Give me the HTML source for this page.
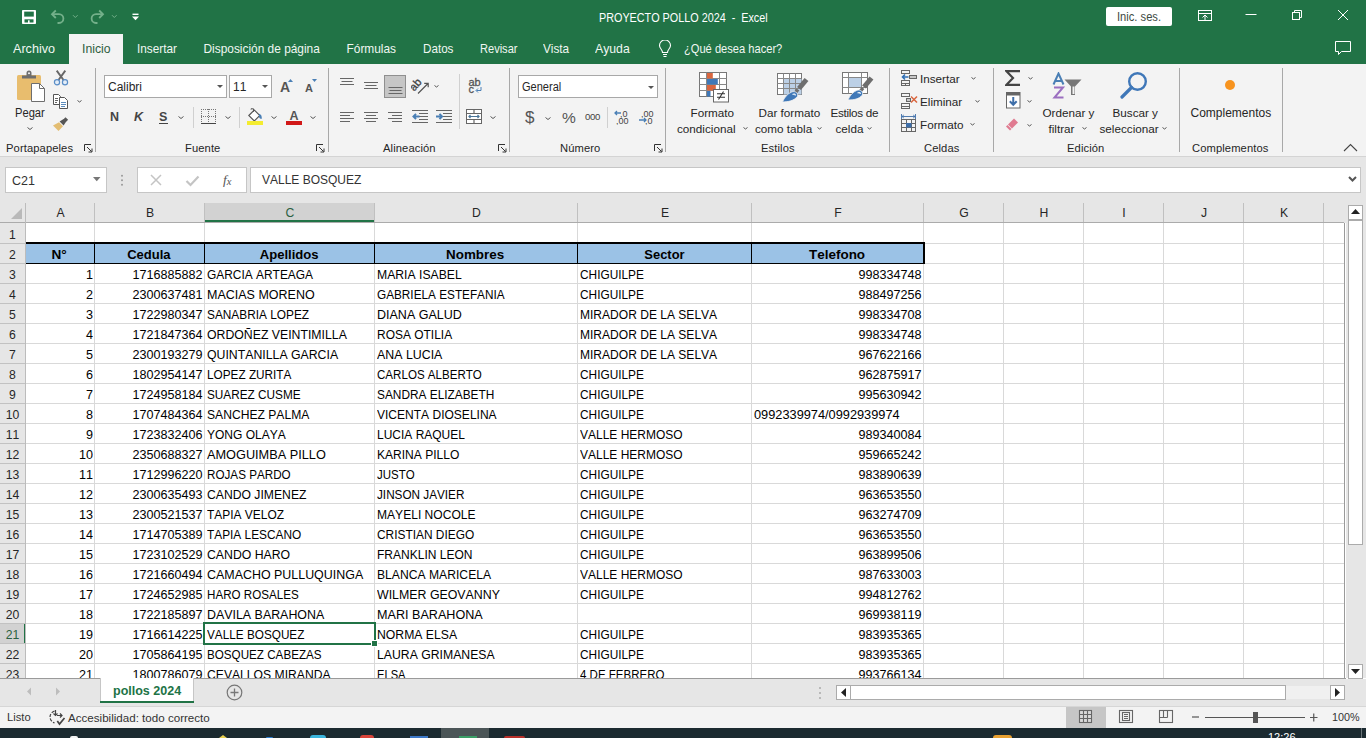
<!DOCTYPE html><html><head><meta charset="utf-8"><style>
*{margin:0;padding:0;box-sizing:border-box}
html,body{width:1366px;height:738px;overflow:hidden;background:#fff;font-family:"Liberation Sans",sans-serif;font-kerning:none}
.a{position:absolute}
.t{position:absolute;white-space:pre;line-height:1}
#title{left:0;top:0;width:1366px;height:64px;background:#217346}
#ribbon{left:0;top:64px;width:1366px;height:93px;background:#f3f3f3;border-bottom:1px solid #d4d4d4}
#fbar{left:0;top:157px;width:1366px;height:46px;background:#e6e6e6}
.box{position:absolute;background:#fff;border:1px solid #c6c6c6}
.tab{color:#f0f7f2;font-size:11.9px}
.rl{font-size:12px;color:#262626}
.gl{font-size:12px;color:#262626}
.sep{position:absolute;width:1px;background:#c8c8c8}
.cell{font-size:12.5px;color:#000;position:absolute;white-space:pre;line-height:1}
.hdr{font-size:12.2px;color:#262626;position:absolute;white-space:pre;line-height:1}
</style></head><body>
<div id="title" class="a"></div>
<svg class="a" style="left:22px;top:10px" width="14" height="14" viewBox="0 0 14 14"><rect x="0" y="0" width="14" height="14" rx="0.8" fill="#fff"/><rect x="2.2" y="1.6" width="9.6" height="5" fill="#217346"/><rect x="2.5" y="9.3" width="9" height="3.2" fill="#217346"/><rect x="6" y="10.3" width="1.6" height="3" fill="#fff"/></svg>
<svg class="a" style="left:48px;top:9px" width="80" height="16" viewBox="0 0 80 16"><g fill="none" stroke="#74b08a" stroke-width="1.8"><path d="M4 5.2h7a4.4 4.4 0 0 1 0 8.8H9.5"/><path d="M7.8 1.5L4 5.2 7.8 9"/><path d="M25 6.2l2.3 2.3L29.6 6.2" stroke-width="1"/><path d="M55 5.2h-7a4.4 4.4 0 0 0 0 8.8h1.5"/><path d="M51.2 1.5L55 5.2 51.2 9"/><path d="M64 6.2l2.3 2.3L68.6 6.2" stroke-width="1"/></g></svg>
<svg class="a" style="left:132px;top:13px" width="7" height="8" viewBox="0 0 7 8"><rect x="0.5" y="0.6" width="6" height="1.4" fill="#fff"/><path d="M0 3.4h7L3.5 7.2z" fill="#fff"/></svg>
<div class="t" style="left:599px;top:12px;font-size:12px;color:#fff;transform:scaleX(0.9);transform-origin:0 0">PROYECTO POLLO 2024  -  Excel</div>
<div class="a" style="left:1106px;top:7px;width:66px;height:19px;background:#fff;border-radius:2px"></div>
<div class="t" style="left:1117px;top:11px;font-size:12px;color:#3d4a42;transform:scaleX(0.93);transform-origin:0 0">Inic. ses.</div>
<svg class="a" style="left:1195px;top:8px" width="170" height="50" viewBox="0 0 170 50"><g fill="none" stroke="#fff" stroke-width="1"><rect x="3.5" y="2.5" width="13" height="10"/><path d="M3.5 5.5h13M10 12V7M7.5 9.5L10 7l2.5 2.5"/><path d="M50.5 6.5h11"/><rect x="97.5" y="4.5" width="7" height="7"/><path d="M99.5 4.5v-2h7v7h-2"/><path d="M143 2l10 10M153 2l-10 10"/><path d="M140.5 33.5h15v10h-9l-3 3v-3h-3z"/></g></svg>
<div class="a" style="left:69px;top:34px;width:54px;height:30px;background:#f3f3f3"></div>
<div class="t tab" style="left:13px;top:44px;color:#f0f7f2;transform:scaleX(1.06);transform-origin:0 0">Archivo</div>
<div class="t tab" style="left:81.5px;top:44px;color:#2f5e41;transform:scaleX(1.03);transform-origin:0 0">Inicio</div>
<div class="t tab" style="left:137px;top:44px;color:#f0f7f2;transform:scaleX(0.99);transform-origin:0 0">Insertar</div>
<div class="t tab" style="left:203.5px;top:44px;color:#f0f7f2;transform:scaleX(1.0);transform-origin:0 0">Disposición de página</div>
<div class="t tab" style="left:346.5px;top:44px;color:#f0f7f2;transform:scaleX(1.0);transform-origin:0 0">Fórmulas</div>
<div class="t tab" style="left:422.5px;top:44px;color:#f0f7f2;transform:scaleX(0.98);transform-origin:0 0">Datos</div>
<div class="t tab" style="left:479.5px;top:44px;color:#f0f7f2;transform:scaleX(0.93);transform-origin:0 0">Revisar</div>
<div class="t tab" style="left:543px;top:44px;color:#f0f7f2;transform:scaleX(0.99);transform-origin:0 0">Vista</div>
<div class="t tab" style="left:595px;top:44px;color:#f0f7f2;transform:scaleX(1.03);transform-origin:0 0">Ayuda</div>
<svg class="a" style="left:658px;top:40px" width="14" height="18" viewBox="0 0 14 18"><g fill="none" stroke="#fff" stroke-width="1.1"><path d="M4.5 12.5c0-3-3-4-3-7a5.5 5.5 0 0 1 11 0c0 3-3 4-3 7z"/><path d="M5 14.5h4M5.5 16.5h3"/></g></svg>
<div class="t tab" style="left:684px;top:44px;transform:scaleX(0.935);transform-origin:0 0">¿Qué desea hacer?</div>
<div id="ribbon" class="a"></div>
<div class="a" style="left:95px;top:68px;width:1px;height:84px;background:#a8a8a8"></div>
<div class="a" style="left:328px;top:68px;width:1px;height:84px;background:#a8a8a8"></div>
<div class="a" style="left:509px;top:68px;width:1px;height:84px;background:#a8a8a8"></div>
<div class="a" style="left:665px;top:68px;width:1px;height:84px;background:#a8a8a8"></div>
<div class="a" style="left:889px;top:68px;width:1px;height:84px;background:#a8a8a8"></div>
<div class="a" style="left:993px;top:68px;width:1px;height:84px;background:#a8a8a8"></div>
<div class="a" style="left:1179px;top:68px;width:1px;height:84px;background:#a8a8a8"></div>
<div class="a" style="left:1282px;top:68px;width:1px;height:84px;background:#a8a8a8"></div>
<div class="t" style="left:6px;top:142.52px;font-size:11.2px;color:#262626;letter-spacing:0.1px">Portapapeles</div>
<div class="t" style="left:185px;top:142.52px;font-size:11.2px;color:#262626;letter-spacing:0.1px">Fuente</div>
<div class="t" style="left:383px;top:142.52px;font-size:11.2px;color:#262626;letter-spacing:0.1px">Alineación</div>
<div class="t" style="left:560px;top:142.52px;font-size:11.2px;color:#262626;letter-spacing:0.1px">Número</div>
<div class="t" style="left:761px;top:142.52px;font-size:11.2px;color:#262626;letter-spacing:0.1px">Estilos</div>
<div class="t" style="left:924px;top:142.52px;font-size:11.2px;color:#262626;letter-spacing:0.1px">Celdas</div>
<div class="t" style="left:1067px;top:142.52px;font-size:11.2px;color:#262626;letter-spacing:0.1px">Edición</div>
<div class="t" style="left:1192px;top:142.52px;font-size:11.2px;color:#262626;letter-spacing:0.1px">Complementos</div>
<svg class="a" style="left:84px;top:144px" width="9" height="9" viewBox="0 0 9 9"><g fill="none" stroke="#333" stroke-width="1"><path d="M0.5 7V0.5H7"/><path d="M3 3l4.5 4.5M8 4.5V8H4.5"/></g></svg>
<svg class="a" style="left:316px;top:144px" width="9" height="9" viewBox="0 0 9 9"><g fill="none" stroke="#333" stroke-width="1"><path d="M0.5 7V0.5H7"/><path d="M3 3l4.5 4.5M8 4.5V8H4.5"/></g></svg>
<svg class="a" style="left:498px;top:144px" width="9" height="9" viewBox="0 0 9 9"><g fill="none" stroke="#333" stroke-width="1"><path d="M0.5 7V0.5H7"/><path d="M3 3l4.5 4.5M8 4.5V8H4.5"/></g></svg>
<svg class="a" style="left:654px;top:144px" width="9" height="9" viewBox="0 0 9 9"><g fill="none" stroke="#333" stroke-width="1"><path d="M0.5 7V0.5H7"/><path d="M3 3l4.5 4.5M8 4.5V8H4.5"/></g></svg>
<svg class="a" style="left:15px;top:70px" width="32" height="34" viewBox="0 0 32 34">
<rect x="2" y="5" width="24" height="25" rx="1.5" fill="#e8bd6e"/>
<path d="M7 8.5V5.5h4.5V3a2.5 2.5 0 0 1 5 0v2.5H21v3z" fill="#6e6e6e"/><circle cx="14" cy="3.3" r="1" fill="#f3f3f3"/>
<path d="M16.5 13.5h8l5 5v13h-13z" fill="#fff" stroke="#6e6e6e" stroke-width="1"/>
<path d="M24.5 13.5v5h5" fill="none" stroke="#6e6e6e" stroke-width="1"/>
</svg>
<div class="t" style="left:14.5px;top:106.85px;font-size:12px;color:#262626;transform:scaleX(0.93);transform-origin:0 0">Pegar</div>
<svg class="a" style="left:27px;top:127px" width="6" height="4" viewBox="0 0 6 4"><path d="M0.5 0.5l2.5 2.0l2.5 -2.0" fill="none" stroke="#555" stroke-width="1"/></svg>
<svg class="a" style="left:53px;top:70px" width="16" height="16" viewBox="0 0 16 16">
<path d="M5.3 10.2L12.3 0.6M10.7 10.2L3.7 0.6" fill="none" stroke="#666" stroke-width="1.9"/>
<g fill="#e4edf7" stroke="#5b8ec7" stroke-width="1.2"><circle cx="4" cy="12.3" r="2.6"/><circle cx="12" cy="12.3" r="2.6"/></g>
</svg>
<svg class="a" style="left:52px;top:93px" width="17" height="16" viewBox="0 0 17 16">
<path d="M1.5 1.5h5l2 2v8h-7z" fill="#fff" stroke="#555" stroke-width="1"/>
<path d="M3 5.5h3M3 7.5h3M3 9.5h2" stroke="#555" stroke-width="0.9"/>
<path d="M7.5 4.5h5l3 3v8h-8z" fill="#fff" stroke="#555" stroke-width="1"/>
<path d="M9 9.5h5M9 11.5h5M9 13.5h4" stroke="#4a7fb5" stroke-width="0.9"/>
</svg>
<svg class="a" style="left:77px;top:100px" width="5" height="4" viewBox="0 0 5 4"><path d="M0.5 0.5l2.0 1.5l2.0 -1.5" fill="none" stroke="#555" stroke-width="1"/></svg>
<svg class="a" style="left:52px;top:116px" width="18" height="16" viewBox="0 0 18 16">
<path d="M13.5 1.2l2.6 2.6-2.2 2.2-2.6-2.6z" fill="#555"/>
<path d="M7.6 5.6l4-2.6 2.6 2.6-2.6 4z" fill="#555"/>
<path d="M7 6.2l4 4-4.5 4.8L1 9.6z" fill="#e3bd72"/>
</svg>
<div class="box" style="left:104px;top:75px;width:123px;height:23px;border-color:#a8a8a8"></div>
<div class="t" style="left:108px;top:80.85px;font-size:12px;color:#262626;">Calibri</div>
<svg class="a" style="left:217px;top:85px" width="6" height="3"><path d="M0 0h6L3 3z" fill="#555"/></svg>
<div class="box" style="left:229px;top:75px;width:43px;height:23px;border-color:#a8a8a8"></div>
<div class="t" style="left:233px;top:80.85px;font-size:12px;color:#262626;">11</div>
<svg class="a" style="left:262px;top:85px" width="6" height="3"><path d="M0 0h6L3 3z" fill="#555"/></svg>
<div class="t" style="left:280px;top:80.46px;font-size:14px;color:#555;font-weight:bold">A</div>
<svg class="a" style="left:288px;top:79px" width="5" height="3"><path d="M0 3h5L2.5 0z" fill="#4a7fb5"/></svg>
<div class="t" style="left:305px;top:82.99px;font-size:11px;color:#555;font-weight:bold">A</div>
<svg class="a" style="left:312px;top:79px" width="5" height="3"><path d="M0 0h5L2.5 3z" fill="#4a7fb5"/></svg>
<div class="t" style="left:110px;top:110.92px;font-size:12.5px;color:#444;font-weight:bold">N</div>
<div class="t" style="left:134px;top:110.92px;font-size:12.5px;color:#444;font-weight:bold;font-style:italic">K</div>
<div class="t" style="left:159px;top:110.92px;font-size:12.5px;color:#444;font-weight:bold">S</div>
<div class="a" style="left:159px;top:123px;width:9px;height:1px;background:#444"></div>
<svg class="a" style="left:178px;top:116px" width="6" height="4" viewBox="0 0 6 4"><path d="M0.5 0.5l2.5 2.0l2.5 -2.0" fill="none" stroke="#555" stroke-width="1"/></svg>
<div class="a" style="left:193px;top:107px;width:1px;height:21px;background:#d0d0d0"></div>
<svg class="a" style="left:201px;top:109px" width="15" height="15" viewBox="0 0 15 15">
<g fill="none" stroke="#777" stroke-width="1" stroke-dasharray="1 1"><path d="M0 0.5h15M14.5 0v14M0.5 0v14M7.5 0v14M0 7.5h15"/></g>
<path d="M0 14.5h15" stroke="#444" stroke-width="1"/>
</svg>
<svg class="a" style="left:225px;top:116px" width="6" height="4" viewBox="0 0 6 4"><path d="M0.5 0.5l2.5 2.0l2.5 -2.0" fill="none" stroke="#555" stroke-width="1"/></svg>
<div class="a" style="left:239px;top:107px;width:1px;height:21px;background:#d0d0d0"></div>
<svg class="a" style="left:246px;top:108px" width="18" height="18" viewBox="0 0 18 18">
<path d="M2.8 7.5l5.5-5.5 5.5 5.5-5.5 5.5z" fill="#fff" stroke="#555" stroke-width="1.1"/>
<path d="M5 1.5V0.8h2.5v3" fill="none" stroke="#555" stroke-width="1"/>
<path d="M13 5.8c2.2 0.6 3.2 2.6 2.6 5.2-1.4-0.2-2.6-1.4-2.6-2.6z" fill="#4a7fb5"/>
<rect x="1" y="13" width="16" height="4" fill="#f4ec30"/>
</svg>
<svg class="a" style="left:271px;top:116px" width="6" height="4" viewBox="0 0 6 4"><path d="M0.5 0.5l2.5 2.0l2.5 -2.0" fill="none" stroke="#555" stroke-width="1"/></svg>
<div class="t" style="left:289.5px;top:110.42px;font-size:12.5px;color:#555;font-weight:bold">A</div>
<div class="a" style="left:286px;top:121px;width:16px;height:4px;background:#d11818"></div>
<svg class="a" style="left:310px;top:116px" width="6" height="4" viewBox="0 0 6 4"><path d="M0.5 0.5l2.5 2.0l2.5 -2.0" fill="none" stroke="#555" stroke-width="1"/></svg>
<div class="a" style="left:384px;top:75px;width:22px;height:23px;background:#c6c6c6;border:1px solid #8f8f8f"></div>
<svg class="a" style="left:339px;top:76px" width="120" height="50" viewBox="0 0 120 50">
<g stroke="#666" stroke-width="1">
<path d="M1 2.5h14M2.5 5.5h11M1 8.5h14"/>
<path d="M25 6.5h14M26.5 9.5h11M25 12.5h14"/>
<path d="M49.5 11.5h14M50.5 14.5h12M49.5 17.5h14"/>
<path d="M1 36.5h14M1 39.5h10M1 42.5h14M1 45.5h10"/>
<path d="M25 36.5h14M27 39.5h10M25 42.5h14M27 45.5h10"/>
<path d="M49 36.5h14M53 39.5h10M49 42.5h14M53 45.5h10"/>
<path d="M73 34.5h16M80 37.5h9M80 40.5h9M80 43.5h9M73 46.5h16"/>
<path d="M97 34.5h16M104 37.5h9M104 40.5h9M104 43.5h9M97 46.5h16"/>
</g>
<g fill="none" stroke="#4a7fb5" stroke-width="1.9"><path d="M74.5 40.5h6M77 37.8l-2.6 2.7 2.6 2.7"/><path d="M97 40.5h6M100.5 37.8l2.6 2.7-2.6 2.7"/></g>
</svg>
<svg class="a" style="left:411px;top:77px" width="19" height="17" viewBox="0 0 19 17">
<text x="0" y="0" transform="translate(3.2 14.8) rotate(-50)" font-family="Liberation Sans" font-size="11" fill="#444" stroke="#444" stroke-width="0.35">ab</text>
<path d="M7 16.5L17 6.5M13.2 6.3h4v4" fill="none" stroke="#555" stroke-width="1.2"/>
</svg>
<svg class="a" style="left:434px;top:85px" width="5" height="4" viewBox="0 0 5 4"><path d="M0.5 0.5l2.0 1.5l2.0 -1.5" fill="none" stroke="#555" stroke-width="1"/></svg>
<div class="a" style="left:459px;top:74px;width:1px;height:55px;background:#d0d0d0"></div>
<div class="t" style="left:468.5px;top:76.69px;font-size:11px;color:#555;-webkit-text-stroke:0.3px #555">ab</div>
<div class="t" style="left:468.5px;top:83.69px;font-size:11px;color:#555;-webkit-text-stroke:0.3px #555">c</div>
<svg class="a" style="left:475px;top:87px" width="7" height="6"><path d="M6 0v3.5H1.5M3 1.5L1 3.5 3 5.5" fill="none" stroke="#4a7fb5" stroke-width="1"/></svg>
<svg class="a" style="left:466px;top:109px" width="17" height="16" viewBox="0 0 17 16">
<rect x="0.5" y="0.5" width="15" height="14" fill="#fff" stroke="#666" stroke-width="1"/>
<path d="M0.5 4.5h15M0.5 10.5h15M8 0.5v4M8 10.5v4" stroke="#666" stroke-width="1.2"/>
<path d="M3 7.5h10M4.5 6l-1.5 1.5 1.5 1.5M11.5 6l1.5 1.5-1.5 1.5" fill="none" stroke="#4a7598" stroke-width="1.2"/>
</svg>
<svg class="a" style="left:490px;top:116px" width="6" height="4" viewBox="0 0 6 4"><path d="M0.5 0.5l2.5 2.0l2.5 -2.0" fill="none" stroke="#555" stroke-width="1"/></svg>
<div class="box" style="left:518px;top:75px;width:140px;height:23px;border-color:#a8a8a8"></div>
<div class="t" style="left:522px;top:80.85px;font-size:12px;color:#262626;transform:scaleX(0.92);transform-origin:0 0">General</div>
<svg class="a" style="left:648px;top:86px" width="6" height="3"><path d="M0 0h6L3 3z" fill="#555"/></svg>
<div class="t" style="left:525px;top:109.12px;font-size:17px;color:#555;">$</div>
<svg class="a" style="left:545px;top:117px" width="6" height="4" viewBox="0 0 6 4"><path d="M0.5 0.5l2.5 2.0l2.5 -2.0" fill="none" stroke="#555" stroke-width="1"/></svg>
<div class="t" style="left:562px;top:109.89px;font-size:15.5px;color:#555;">%</div>
<div class="t" style="left:585px;top:112.18px;font-size:9.6px;color:#444;letter-spacing:-0.3px">000</div>
<div class="a" style="left:607px;top:107px;width:1px;height:21px;background:#d0d0d0"></div>
<svg class="a" style="left:614px;top:109px" width="42" height="16" viewBox="0 0 42 16">
<text x="6" y="7.5" font-family="Liberation Sans" font-size="9" fill="#444">,0</text>
<text x="2" y="15" font-family="Liberation Sans" font-size="9" fill="#444">,00</text>
<path d="M1 4h6M3 2L1 4 3 6" fill="none" stroke="#4a7fb5" stroke-width="1.3"/>
<text x="27" y="7.5" font-family="Liberation Sans" font-size="9" fill="#444">,00</text>
<text x="31" y="15" font-family="Liberation Sans" font-size="9" fill="#444">,0</text>
<path d="M25 11h7M30 9l2 2-2 2" fill="none" stroke="#4a7fb5" stroke-width="1.3"/>
</svg>
<svg class="a" style="left:699px;top:72px" width="31" height="32" viewBox="0 0 31 32">
<rect x="0.5" y="0.5" width="27" height="24" fill="#fff" stroke="#777" stroke-width="1"/>
<path d="M0.5 6.5h27M0.5 12.5h27M0.5 18.5h27M7.5 0.5v24M20.5 0.5v24" stroke="#888" stroke-width="1"/>
<rect x="8" y="1" width="5.8" height="5.5" fill="#d9663f"/>
<rect x="8" y="7" width="10.8" height="5.5" fill="#3f78b8"/>
<rect x="8" y="13" width="8.8" height="5.5" fill="#d9663f"/>
<rect x="8" y="19" width="3.5" height="5.5" fill="#3f78b8"/>
<rect x="14.5" y="17.5" width="15" height="12.5" fill="#fff" stroke="#666" stroke-width="1"/>
<path d="M18 21.8h8M18 25.2h8M24.5 19.5l-5 8" stroke="#333" stroke-width="1.1"/>
</svg>
<div class="t" style="left:690.5px;top:107.10px;font-size:11.7px;color:#262626;">Formato</div>
<div class="t" style="left:677px;top:123.10px;font-size:11.7px;color:#262626;">condicional</div>
<svg class="a" style="left:743px;top:127px" width="5" height="4" viewBox="0 0 5 4"><path d="M0.5 0.5l2.0 1.5l2.0 -1.5" fill="none" stroke="#555" stroke-width="1"/></svg>
<svg class="a" style="left:777px;top:73px" width="33" height="31" viewBox="0 0 33 31">
<rect x="0.5" y="0.5" width="24" height="21" fill="#fff" stroke="#777"/>
<rect x="7" y="6" width="17.5" height="15.5" fill="#bcd0e6"/>
<path d="M0.5 5.5h24M0.5 10.5h24M0.5 15.5h24M6.5 0.5v21M12.5 0.5v21M18.5 0.5v21" stroke="#888" stroke-width="1"/>
<path d="M29.5 6.5L22 15.5" stroke="#6e6e6e" stroke-width="5"/>
<path d="M21 16.5L18.5 19.5" stroke="#6e6e6e" stroke-width="3.5"/>
<path d="M5.5 29C7 25 10.5 20.5 15 18.8 18.8 17.8 21.6 20.3 20.3 23.6 17.3 27.6 11 29 5.5 29z" fill="#3f78b8" stroke="#f3f3f3" stroke-width="0.8"/>
<path d="M15.5 21.5c1.5-0.8 3-0.3 2.8 1" fill="none" stroke="#e8f2fb" stroke-width="1.3"/>
</svg>
<div class="t" style="left:758.5px;top:107.10px;font-size:11.7px;color:#262626;">Dar formato</div>
<div class="t" style="left:755px;top:123.10px;font-size:11.7px;color:#262626;">como tabla</div>
<svg class="a" style="left:817px;top:127px" width="5" height="4" viewBox="0 0 5 4"><path d="M0.5 0.5l2.0 1.5l2.0 -1.5" fill="none" stroke="#555" stroke-width="1"/></svg>
<svg class="a" style="left:842px;top:72px" width="33" height="31" viewBox="0 0 33 31">
<rect x="0.5" y="0.5" width="25" height="21" fill="#fff" stroke="#777"/>
<rect x="7" y="6" width="12" height="9.5" fill="#bcd0e6"/>
<path d="M0.5 5.5h25M0.5 15.5h25M6.5 0.5v21M19.5 0.5v21" stroke="#888" stroke-width="1"/>
<path d="M29.5 6L22 15" stroke="#6e6e6e" stroke-width="5"/>
<path d="M21 16L18.5 19" stroke="#6e6e6e" stroke-width="3.5"/>
<path d="M6 28C7.5 24 11 19.8 15 18.3 18.8 17.3 21.6 19.8 20.3 23.1 17.3 27.1 11.5 28 6 28z" fill="#3f78b8" stroke="#f3f3f3" stroke-width="0.8"/>
<path d="M15.5 21c1.5-0.8 3-0.3 2.8 1" fill="none" stroke="#e8f2fb" stroke-width="1.3"/>
</svg>
<div class="t" style="left:830.5px;top:107.10px;font-size:11.7px;color:#262626;letter-spacing:-0.3px">Estilos de</div>
<div class="t" style="left:835.5px;top:123.10px;font-size:11.7px;color:#262626;">celda</div>
<svg class="a" style="left:867px;top:127px" width="5" height="4" viewBox="0 0 5 4"><path d="M0.5 0.5l2.0 1.5l2.0 -1.5" fill="none" stroke="#555" stroke-width="1"/></svg>
<svg class="a" style="left:901px;top:70px" width="17" height="63" viewBox="0 0 17 63">
<g fill="none" stroke="#666" stroke-width="1">
<rect x="0.5" y="0.5" width="8" height="3"/><rect x="0.5" y="10.5" width="8" height="3"/><rect x="0.5" y="13.5" width="4" height="2"/><rect x="4.5" y="13.5" width="4" height="2"/>
<rect x="8.5" y="5.5" width="7" height="3" fill="#c8c8c8"/>
<rect x="0.5" y="23.5" width="8" height="3"/><rect x="0.5" y="33.5" width="8" height="3"/><rect x="0.5" y="36.5" width="8" height="2"/><rect x="5.5" y="28.5" width="4" height="3" fill="#c8c8c8"/>
<rect x="0.5" y="49.5" width="14" height="12"/><path d="M0.5 53.5h14M0.5 57.5h14M5.5 49.5v12M10.5 49.5v12"/>
</g>
<path d="M1.5 7h6M4 4.5L1.5 7 4 9.5" fill="none" stroke="#2f6fb5" stroke-width="1.6"/>
<path d="M10 26.5l6 6M16 26.5l-6 6" stroke="#d9663f" stroke-width="1.5"/>
<rect x="5" y="53" width="5.5" height="4.5" fill="#3e6ea8"/>
<path d="M1 46.5h13M2.8 45l-1.8 1.5 1.8 1.5M12.2 45l1.8 1.5-1.8 1.5M0.5 44v5M14.5 44v5" fill="none" stroke="#3e6ea8" stroke-width="0.9"/>
</svg>
<div class="t" style="left:920px;top:73.10px;font-size:11.7px;color:#262626;">Insertar</div>
<svg class="a" style="left:971px;top:77px" width="5" height="4" viewBox="0 0 5 4"><path d="M0.5 0.5l2.0 1.5l2.0 -1.5" fill="none" stroke="#555" stroke-width="1"/></svg>
<div class="t" style="left:920px;top:96.10px;font-size:11.7px;color:#262626;">Eliminar</div>
<svg class="a" style="left:975px;top:100px" width="5" height="4" viewBox="0 0 5 4"><path d="M0.5 0.5l2.0 1.5l2.0 -1.5" fill="none" stroke="#555" stroke-width="1"/></svg>
<div class="t" style="left:920px;top:119.10px;font-size:11.7px;color:#262626;">Formato</div>
<svg class="a" style="left:970px;top:123px" width="5" height="4" viewBox="0 0 5 4"><path d="M0.5 0.5l2.0 1.5l2.0 -1.5" fill="none" stroke="#555" stroke-width="1"/></svg>
<svg class="a" style="left:1005px;top:70px" width="16" height="16" viewBox="0 0 16 16"><path d="M15 1.2H1.5L8 8 1.5 14.8H15" fill="none" stroke="#444" stroke-width="2.2" stroke-linejoin="miter"/></svg>
<svg class="a" style="left:1028px;top:77px" width="5" height="4" viewBox="0 0 5 4"><path d="M0.5 0.5l2.0 1.5l2.0 -1.5" fill="none" stroke="#555" stroke-width="1"/></svg>
<svg class="a" style="left:1006px;top:92px" width="15" height="17" viewBox="0 0 15 17">
<rect x="0.5" y="0.5" width="13.5" height="15.5" fill="#fff" stroke="#666"/>
<rect x="0.5" y="0.5" width="13.5" height="3" fill="#666"/>
<path d="M7.25 5v7.5M3.8 9.3l3.45 3.45L10.7 9.3" fill="none" stroke="#3e6ea8" stroke-width="2"/>
</svg>
<svg class="a" style="left:1027px;top:100px" width="5" height="4" viewBox="0 0 5 4"><path d="M0.5 0.5l2.0 1.5l2.0 -1.5" fill="none" stroke="#555" stroke-width="1"/></svg>
<svg class="a" style="left:1005px;top:115px" width="16" height="16" viewBox="0 0 16 16">
<path d="M3 9.5l6-6 4 4-6 6z" fill="#e07a90"/>
<path d="M1 11.5l1.5-1.5 4 4L5 15.5z" fill="#e07a90"/>
</svg>
<svg class="a" style="left:1027px;top:124px" width="5" height="4" viewBox="0 0 5 4"><path d="M0.5 0.5l2.0 1.5l2.0 -1.5" fill="none" stroke="#555" stroke-width="1"/></svg>
<svg class="a" style="left:1052px;top:72px" width="32" height="28" viewBox="0 0 32 28">
<path d="M1.5 12.5L6.5 1.5 11.5 12.5M3.3 9h6.4" fill="none" stroke="#4a7fb5" stroke-width="2"/>
<path d="M2 15.5h9L2.5 25.5h9" fill="none" stroke="#9b6fc0" stroke-width="2"/>
<path d="M12.5 7.5h17l-6.5 7v8.5h-4V14.5z" fill="#777"/>
<path d="M20.5 14.5v7.5h2v-7.5" fill="#f3f3f3"/>
</svg>
<div class="t" style="left:1042.5px;top:106.80px;font-size:11.7px;color:#262626;">Ordenar y</div>
<div class="t" style="left:1048.5px;top:123.10px;font-size:11.7px;color:#262626;">filtrar</div>
<svg class="a" style="left:1082px;top:127px" width="5" height="4" viewBox="0 0 5 4"><path d="M0.5 0.5l2.0 1.5l2.0 -1.5" fill="none" stroke="#555" stroke-width="1"/></svg>
<svg class="a" style="left:1119px;top:71px" width="30" height="28" viewBox="0 0 30 28">
<circle cx="18.5" cy="10.5" r="8.3" fill="none" stroke="#3f77b8" stroke-width="2.4"/>
<path d="M12.5 16.5L3 26" stroke="#3f77b8" stroke-width="3.2" stroke-linecap="round"/>
</svg>
<div class="t" style="left:1112.5px;top:106.80px;font-size:11.7px;color:#262626;">Buscar y</div>
<div class="t" style="left:1099.5px;top:123.10px;font-size:11.7px;color:#262626;">seleccionar</div>
<svg class="a" style="left:1162px;top:127px" width="5" height="4" viewBox="0 0 5 4"><path d="M0.5 0.5l2.0 1.5l2.0 -1.5" fill="none" stroke="#555" stroke-width="1"/></svg>
<div class="a" style="left:1225px;top:80px;width:10px;height:10px;border-radius:5px;background:#f7931e"></div>
<div class="t" style="left:1190.5px;top:106.85px;font-size:12px;color:#262626;">Complementos</div>
<svg class="a" style="left:1343px;top:143px" width="15" height="9" viewBox="0 0 15 9"><path d="M1 8l6.5-6.5L14 8" fill="none" stroke="#444" stroke-width="1.1"/></svg>
<div id="fbar" class="a"></div>
<div class="box" style="left:5px;top:167px;width:102px;height:26px"></div>
<div class="t" style="left:12px;top:175px;font-size:12.5px;color:#333">C21</div>
<svg class="a" style="left:93px;top:177px" width="8" height="5"><path d="M0 0h7.5L3.75 4.2z" fill="#777"/></svg>
<svg class="a" style="left:120px;top:174px" width="4" height="13"><circle cx="2" cy="1.8" r="1" fill="#999"/><circle cx="2" cy="6.3" r="1" fill="#999"/><circle cx="2" cy="10.8" r="1" fill="#999"/></svg>
<div class="box" style="left:137px;top:167px;width:110px;height:26px"></div>
<svg class="a" style="left:149px;top:173px" width="90" height="15" viewBox="0 0 90 15"><g fill="none" stroke="#c4c4c4"><path d="M2 2l10 10M12 2L2 12" stroke-width="1.5"/><path d="M37.5 8l4 4 8-8.5" stroke-width="2.2"/></g></svg>
<div class="t" style="left:223px;top:173px;font-size:13.5px;font-style:italic;font-family:'Liberation Serif',serif;color:#555;font-weight:normal">f<span style="font-size:10.5px;position:relative;top:1px">x</span></div>
<div class="box" style="left:250px;top:167px;width:1111px;height:26px"></div>
<div class="t" style="left:262px;top:174px;font-size:12px;color:#333">VALLE BOSQUEZ</div>
<svg class="a" style="left:1348px;top:176px" width="9" height="6" viewBox="0 0 9 6"><path d="M1 1l3.5 3.5L8 1" fill="none" stroke="#555" stroke-width="2"/></svg>
<div class="a" style="left:0;top:203px;width:1347px;height:20px;background:#e6e6e6"></div>
<div class="a" style="left:204px;top:203px;width:171px;height:19px;background:#d2d2d2"></div>
<div class="a" style="left:204px;top:220px;width:171px;height:2px;background:#217346"></div>
<div class="a" style="left:0;top:222px;width:25px;height:456px;background:#e6e6e6"></div>
<div class="a" style="left:0;top:624px;width:25px;height:19px;background:#d2d2d2"></div>
<div class="a" style="left:24px;top:623px;width:2px;height:21px;background:#217346"></div>
<div class="a" style="left:26px;top:223px;width:1318px;height:455px;background:#fff"></div>
<svg class="a" style="left:10px;top:207px" width="13" height="13"><path d="M12 1v11H1z" fill="#b9b9b9"/></svg>
<div class="hdr" style="left:26px;width:69px;top:207px;text-align:center;color:#262626">A</div>
<div class="hdr" style="left:95px;width:110px;top:207px;text-align:center;color:#262626">B</div>
<div class="hdr" style="left:205px;width:170px;top:207px;text-align:center;color:#2a6041">C</div>
<div class="hdr" style="left:375px;width:203px;top:207px;text-align:center;color:#262626">D</div>
<div class="hdr" style="left:578px;width:174px;top:207px;text-align:center;color:#262626">E</div>
<div class="hdr" style="left:752px;width:172px;top:207px;text-align:center;color:#262626">F</div>
<div class="hdr" style="left:924px;width:80px;top:207px;text-align:center;color:#262626">G</div>
<div class="hdr" style="left:1004px;width:80px;top:207px;text-align:center;color:#262626">H</div>
<div class="hdr" style="left:1084px;width:80px;top:207px;text-align:center;color:#262626">I</div>
<div class="hdr" style="left:1164px;width:80px;top:207px;text-align:center;color:#262626">J</div>
<div class="hdr" style="left:1244px;width:80px;top:207px;text-align:center;color:#262626">K</div>
<div class="a" style="left:94px;top:203px;width:1px;height:19px;background:#c0c0c0"></div>
<div class="a" style="left:204px;top:203px;width:1px;height:19px;background:#c0c0c0"></div>
<div class="a" style="left:374px;top:203px;width:1px;height:19px;background:#c0c0c0"></div>
<div class="a" style="left:577px;top:203px;width:1px;height:19px;background:#c0c0c0"></div>
<div class="a" style="left:751px;top:203px;width:1px;height:19px;background:#c0c0c0"></div>
<div class="a" style="left:923px;top:203px;width:1px;height:19px;background:#c0c0c0"></div>
<div class="a" style="left:1003px;top:203px;width:1px;height:19px;background:#c0c0c0"></div>
<div class="a" style="left:1083px;top:203px;width:1px;height:19px;background:#c0c0c0"></div>
<div class="a" style="left:1163px;top:203px;width:1px;height:19px;background:#c0c0c0"></div>
<div class="a" style="left:1243px;top:203px;width:1px;height:19px;background:#c0c0c0"></div>
<div class="a" style="left:1323px;top:203px;width:1px;height:19px;background:#c0c0c0"></div>
<div class="a" style="left:0;top:222px;width:1344px;height:1px;background:#ababab"></div>
<div class="a" style="left:94px;top:223px;width:1px;height:455px;background:#d9d9d9"></div>
<div class="a" style="left:204px;top:223px;width:1px;height:455px;background:#d9d9d9"></div>
<div class="a" style="left:374px;top:223px;width:1px;height:455px;background:#d9d9d9"></div>
<div class="a" style="left:577px;top:223px;width:1px;height:455px;background:#d9d9d9"></div>
<div class="a" style="left:751px;top:223px;width:1px;height:455px;background:#d9d9d9"></div>
<div class="a" style="left:923px;top:223px;width:1px;height:455px;background:#d9d9d9"></div>
<div class="a" style="left:1003px;top:223px;width:1px;height:455px;background:#d9d9d9"></div>
<div class="a" style="left:1083px;top:223px;width:1px;height:455px;background:#d9d9d9"></div>
<div class="a" style="left:1163px;top:223px;width:1px;height:455px;background:#d9d9d9"></div>
<div class="a" style="left:1243px;top:223px;width:1px;height:455px;background:#d9d9d9"></div>
<div class="a" style="left:1323px;top:223px;width:1px;height:455px;background:#d9d9d9"></div>
<div class="a" style="left:25px;top:203px;width:1px;height:475px;background:#bcbcbc"></div>
<div class="a" style="left:26px;top:243px;width:1318px;height:1px;background:#d9d9d9"></div>
<div class="a" style="left:0;top:243px;width:25px;height:1px;background:#c2c2c2"></div>
<div class="hdr" style="left:0;width:25px;top:229px;text-align:center;color:#262626">1</div>
<div class="a" style="left:26px;top:263px;width:1318px;height:1px;background:#d9d9d9"></div>
<div class="a" style="left:0;top:263px;width:25px;height:1px;background:#c2c2c2"></div>
<div class="hdr" style="left:0;width:25px;top:249px;text-align:center;color:#262626">2</div>
<div class="a" style="left:26px;top:283px;width:1318px;height:1px;background:#d9d9d9"></div>
<div class="a" style="left:0;top:283px;width:25px;height:1px;background:#c2c2c2"></div>
<div class="hdr" style="left:0;width:25px;top:269px;text-align:center;color:#262626">3</div>
<div class="a" style="left:26px;top:303px;width:1318px;height:1px;background:#d9d9d9"></div>
<div class="a" style="left:0;top:303px;width:25px;height:1px;background:#c2c2c2"></div>
<div class="hdr" style="left:0;width:25px;top:289px;text-align:center;color:#262626">4</div>
<div class="a" style="left:26px;top:323px;width:1318px;height:1px;background:#d9d9d9"></div>
<div class="a" style="left:0;top:323px;width:25px;height:1px;background:#c2c2c2"></div>
<div class="hdr" style="left:0;width:25px;top:309px;text-align:center;color:#262626">5</div>
<div class="a" style="left:26px;top:343px;width:1318px;height:1px;background:#d9d9d9"></div>
<div class="a" style="left:0;top:343px;width:25px;height:1px;background:#c2c2c2"></div>
<div class="hdr" style="left:0;width:25px;top:329px;text-align:center;color:#262626">6</div>
<div class="a" style="left:26px;top:363px;width:1318px;height:1px;background:#d9d9d9"></div>
<div class="a" style="left:0;top:363px;width:25px;height:1px;background:#c2c2c2"></div>
<div class="hdr" style="left:0;width:25px;top:349px;text-align:center;color:#262626">7</div>
<div class="a" style="left:26px;top:383px;width:1318px;height:1px;background:#d9d9d9"></div>
<div class="a" style="left:0;top:383px;width:25px;height:1px;background:#c2c2c2"></div>
<div class="hdr" style="left:0;width:25px;top:369px;text-align:center;color:#262626">8</div>
<div class="a" style="left:26px;top:403px;width:1318px;height:1px;background:#d9d9d9"></div>
<div class="a" style="left:0;top:403px;width:25px;height:1px;background:#c2c2c2"></div>
<div class="hdr" style="left:0;width:25px;top:389px;text-align:center;color:#262626">9</div>
<div class="a" style="left:26px;top:423px;width:1318px;height:1px;background:#d9d9d9"></div>
<div class="a" style="left:0;top:423px;width:25px;height:1px;background:#c2c2c2"></div>
<div class="hdr" style="left:0;width:25px;top:409px;text-align:center;color:#262626">10</div>
<div class="a" style="left:26px;top:443px;width:1318px;height:1px;background:#d9d9d9"></div>
<div class="a" style="left:0;top:443px;width:25px;height:1px;background:#c2c2c2"></div>
<div class="hdr" style="left:0;width:25px;top:429px;text-align:center;color:#262626">11</div>
<div class="a" style="left:26px;top:463px;width:1318px;height:1px;background:#d9d9d9"></div>
<div class="a" style="left:0;top:463px;width:25px;height:1px;background:#c2c2c2"></div>
<div class="hdr" style="left:0;width:25px;top:449px;text-align:center;color:#262626">12</div>
<div class="a" style="left:26px;top:483px;width:1318px;height:1px;background:#d9d9d9"></div>
<div class="a" style="left:0;top:483px;width:25px;height:1px;background:#c2c2c2"></div>
<div class="hdr" style="left:0;width:25px;top:469px;text-align:center;color:#262626">13</div>
<div class="a" style="left:26px;top:503px;width:1318px;height:1px;background:#d9d9d9"></div>
<div class="a" style="left:0;top:503px;width:25px;height:1px;background:#c2c2c2"></div>
<div class="hdr" style="left:0;width:25px;top:489px;text-align:center;color:#262626">14</div>
<div class="a" style="left:26px;top:523px;width:1318px;height:1px;background:#d9d9d9"></div>
<div class="a" style="left:0;top:523px;width:25px;height:1px;background:#c2c2c2"></div>
<div class="hdr" style="left:0;width:25px;top:509px;text-align:center;color:#262626">15</div>
<div class="a" style="left:26px;top:543px;width:1318px;height:1px;background:#d9d9d9"></div>
<div class="a" style="left:0;top:543px;width:25px;height:1px;background:#c2c2c2"></div>
<div class="hdr" style="left:0;width:25px;top:529px;text-align:center;color:#262626">16</div>
<div class="a" style="left:26px;top:563px;width:1318px;height:1px;background:#d9d9d9"></div>
<div class="a" style="left:0;top:563px;width:25px;height:1px;background:#c2c2c2"></div>
<div class="hdr" style="left:0;width:25px;top:549px;text-align:center;color:#262626">17</div>
<div class="a" style="left:26px;top:583px;width:1318px;height:1px;background:#d9d9d9"></div>
<div class="a" style="left:0;top:583px;width:25px;height:1px;background:#c2c2c2"></div>
<div class="hdr" style="left:0;width:25px;top:569px;text-align:center;color:#262626">18</div>
<div class="a" style="left:26px;top:603px;width:1318px;height:1px;background:#d9d9d9"></div>
<div class="a" style="left:0;top:603px;width:25px;height:1px;background:#c2c2c2"></div>
<div class="hdr" style="left:0;width:25px;top:589px;text-align:center;color:#262626">19</div>
<div class="a" style="left:26px;top:623px;width:1318px;height:1px;background:#d9d9d9"></div>
<div class="a" style="left:0;top:623px;width:25px;height:1px;background:#c2c2c2"></div>
<div class="hdr" style="left:0;width:25px;top:609px;text-align:center;color:#262626">20</div>
<div class="a" style="left:26px;top:643px;width:1318px;height:1px;background:#d9d9d9"></div>
<div class="a" style="left:0;top:643px;width:25px;height:1px;background:#c2c2c2"></div>
<div class="hdr" style="left:0;width:25px;top:629px;text-align:center;color:#2a6041">21</div>
<div class="a" style="left:26px;top:663px;width:1318px;height:1px;background:#d9d9d9"></div>
<div class="a" style="left:0;top:663px;width:25px;height:1px;background:#c2c2c2"></div>
<div class="hdr" style="left:0;width:25px;top:649px;text-align:center;color:#262626">22</div>
<div class="hdr" style="left:0;width:25px;top:669px;text-align:center;color:#262626">23</div>
<div class="a" style="left:1344px;top:223px;width:1px;height:455px;background:#9a9a9a"></div>
<div class="a" style="left:0;top:678px;width:1345px;height:1px;background:#a6a6a6"></div>
<div class="a" style="left:26px;top:244px;width:897px;height:19px;background:#9bc2e6"></div>
<div class="a" style="left:26px;top:242px;width:898px;height:2px;background:#000"></div>
<div class="a" style="left:26px;top:263px;width:898px;height:1px;background:#000"></div>
<div class="a" style="left:94px;top:242px;width:1px;height:22px;background:#000"></div>
<div class="a" style="left:204px;top:242px;width:1px;height:22px;background:#000"></div>
<div class="a" style="left:374px;top:242px;width:1px;height:22px;background:#000"></div>
<div class="a" style="left:577px;top:242px;width:1px;height:22px;background:#000"></div>
<div class="a" style="left:751px;top:242px;width:1px;height:22px;background:#000"></div>
<div class="a" style="left:923px;top:242px;width:2px;height:22px;background:#000"></div>
<div class="cell" style="left:25px;width:69px;top:249px;text-align:center;font-weight:bold"><span style="display:inline-block;transform:scaleX(1.088)">N°</span></div>
<div class="cell" style="left:94px;width:110px;top:249px;text-align:center;font-weight:bold"><span style="display:inline-block;transform:scaleX(1.041)">Cedula</span></div>
<div class="cell" style="left:204px;width:170px;top:249px;text-align:center;font-weight:bold"><span style="display:inline-block;transform:scaleX(1.046)">Apellidos</span></div>
<div class="cell" style="left:374px;width:203px;top:249px;text-align:center;font-weight:bold"><span style="display:inline-block;transform:scaleX(1.071)">Nombres</span></div>
<div class="cell" style="left:577px;width:174px;top:249px;text-align:center;font-weight:bold"><span style="display:inline-block;transform:scaleX(1.033)">Sector</span></div>
<div class="cell" style="left:751px;width:172px;top:249px;text-align:center;font-weight:bold"><span style="display:inline-block;transform:scaleX(1.077)">Telefono</span></div>
<div class="cell" style="right:1273px;top:269px;transform:scaleX(1.007);transform-origin:100% 0">1</div>
<div class="cell" style="right:1163px;top:269px;transform:scaleX(1.007);transform-origin:100% 0">1716885882</div>
<div class="cell" style="left:207px;top:269px;transform:scaleX(0.954);transform-origin:0 0">GARCIA ARTEAGA</div>
<div class="cell" style="left:377px;top:269px;transform:scaleX(0.976);transform-origin:0 0">MARIA ISABEL</div>
<div class="cell" style="left:580px;top:269px;transform:scaleX(0.949);transform-origin:0 0">CHIGUILPE</div>
<div class="cell" style="right:444px;top:269px;transform:scaleX(1.007);transform-origin:100% 0">998334748</div>
<div class="cell" style="right:1273px;top:289px;transform:scaleX(1.007);transform-origin:100% 0">2</div>
<div class="cell" style="right:1163px;top:289px;transform:scaleX(1.007);transform-origin:100% 0">2300637481</div>
<div class="cell" style="left:207px;top:289px;transform:scaleX(1.000);transform-origin:0 0">MACIAS MORENO</div>
<div class="cell" style="left:377px;top:289px;transform:scaleX(0.942);transform-origin:0 0">GABRIELA ESTEFANIA</div>
<div class="cell" style="left:580px;top:289px;transform:scaleX(0.949);transform-origin:0 0">CHIGUILPE</div>
<div class="cell" style="right:444px;top:289px;transform:scaleX(1.007);transform-origin:100% 0">988497256</div>
<div class="cell" style="right:1273px;top:309px;transform:scaleX(1.007);transform-origin:100% 0">3</div>
<div class="cell" style="right:1163px;top:309px;transform:scaleX(1.007);transform-origin:100% 0">1722980347</div>
<div class="cell" style="left:207px;top:309px;transform:scaleX(0.948);transform-origin:0 0">SANABRIA LOPEZ</div>
<div class="cell" style="left:377px;top:309px;transform:scaleX(1.001);transform-origin:0 0">DIANA GALUD</div>
<div class="cell" style="left:580px;top:309px;transform:scaleX(0.963);transform-origin:0 0">MIRADOR DE LA SELVA</div>
<div class="cell" style="right:444px;top:309px;transform:scaleX(1.007);transform-origin:100% 0">998334708</div>
<div class="cell" style="right:1273px;top:329px;transform:scaleX(1.007);transform-origin:100% 0">4</div>
<div class="cell" style="right:1163px;top:329px;transform:scaleX(1.007);transform-origin:100% 0">1721847364</div>
<div class="cell" style="left:207px;top:329px;transform:scaleX(0.982);transform-origin:0 0">ORDOÑEZ VEINTIMILLA</div>
<div class="cell" style="left:377px;top:329px;transform:scaleX(0.957);transform-origin:0 0">ROSA OTILIA</div>
<div class="cell" style="left:580px;top:329px;transform:scaleX(0.963);transform-origin:0 0">MIRADOR DE LA SELVA</div>
<div class="cell" style="right:444px;top:329px;transform:scaleX(1.007);transform-origin:100% 0">998334748</div>
<div class="cell" style="right:1273px;top:349px;transform:scaleX(1.007);transform-origin:100% 0">5</div>
<div class="cell" style="right:1163px;top:349px;transform:scaleX(1.007);transform-origin:100% 0">2300193279</div>
<div class="cell" style="left:207px;top:349px;transform:scaleX(0.983);transform-origin:0 0">QUINTANILLA GARCIA</div>
<div class="cell" style="left:377px;top:349px;transform:scaleX(0.990);transform-origin:0 0">ANA LUCIA</div>
<div class="cell" style="left:580px;top:349px;transform:scaleX(0.963);transform-origin:0 0">MIRADOR DE LA SELVA</div>
<div class="cell" style="right:444px;top:349px;transform:scaleX(1.007);transform-origin:100% 0">967622166</div>
<div class="cell" style="right:1273px;top:369px;transform:scaleX(1.007);transform-origin:100% 0">6</div>
<div class="cell" style="right:1163px;top:369px;transform:scaleX(1.007);transform-origin:100% 0">1802954147</div>
<div class="cell" style="left:207px;top:369px;transform:scaleX(0.942);transform-origin:0 0">LOPEZ ZURITA</div>
<div class="cell" style="left:377px;top:369px;transform:scaleX(0.926);transform-origin:0 0">CARLOS ALBERTO</div>
<div class="cell" style="left:580px;top:369px;transform:scaleX(0.949);transform-origin:0 0">CHIGUILPE</div>
<div class="cell" style="right:444px;top:369px;transform:scaleX(1.007);transform-origin:100% 0">962875917</div>
<div class="cell" style="right:1273px;top:389px;transform:scaleX(1.007);transform-origin:100% 0">7</div>
<div class="cell" style="right:1163px;top:389px;transform:scaleX(1.007);transform-origin:100% 0">1724958184</div>
<div class="cell" style="left:207px;top:389px;transform:scaleX(0.943);transform-origin:0 0">SUAREZ CUSME</div>
<div class="cell" style="left:377px;top:389px;transform:scaleX(0.949);transform-origin:0 0">SANDRA ELIZABETH</div>
<div class="cell" style="left:580px;top:389px;transform:scaleX(0.949);transform-origin:0 0">CHIGUILPE</div>
<div class="cell" style="right:444px;top:389px;transform:scaleX(1.007);transform-origin:100% 0">995630942</div>
<div class="cell" style="right:1273px;top:409px;transform:scaleX(1.007);transform-origin:100% 0">8</div>
<div class="cell" style="right:1163px;top:409px;transform:scaleX(1.007);transform-origin:100% 0">1707484364</div>
<div class="cell" style="left:207px;top:409px;transform:scaleX(0.969);transform-origin:0 0">SANCHEZ PALMA</div>
<div class="cell" style="left:377px;top:409px;transform:scaleX(0.962);transform-origin:0 0">VICENTA DIOSELINA</div>
<div class="cell" style="left:580px;top:409px;transform:scaleX(0.949);transform-origin:0 0">CHIGUILPE</div>
<div class="cell" style="left:754px;top:409px;transform:scaleX(1.022);transform-origin:0 0">0992339974/0992939974</div>
<div class="cell" style="right:1273px;top:429px;transform:scaleX(1.007);transform-origin:100% 0">9</div>
<div class="cell" style="right:1163px;top:429px;transform:scaleX(1.007);transform-origin:100% 0">1723832406</div>
<div class="cell" style="left:207px;top:429px;transform:scaleX(0.962);transform-origin:0 0">YONG OLAYA</div>
<div class="cell" style="left:377px;top:429px;transform:scaleX(0.959);transform-origin:0 0">LUCIA RAQUEL</div>
<div class="cell" style="left:580px;top:429px;transform:scaleX(0.959);transform-origin:0 0">VALLE HERMOSO</div>
<div class="cell" style="right:444px;top:429px;transform:scaleX(1.007);transform-origin:100% 0">989340084</div>
<div class="cell" style="right:1273px;top:449px;transform:scaleX(1.007);transform-origin:100% 0">10</div>
<div class="cell" style="right:1163px;top:449px;transform:scaleX(1.007);transform-origin:100% 0">2350688327</div>
<div class="cell" style="left:207px;top:449px;transform:scaleX(1.018);transform-origin:0 0">AMOGUIMBA PILLO</div>
<div class="cell" style="left:377px;top:449px;transform:scaleX(0.964);transform-origin:0 0">KARINA PILLO</div>
<div class="cell" style="left:580px;top:449px;transform:scaleX(0.959);transform-origin:0 0">VALLE HERMOSO</div>
<div class="cell" style="right:444px;top:449px;transform:scaleX(1.007);transform-origin:100% 0">959665242</div>
<div class="cell" style="right:1273px;top:469px;transform:scaleX(1.007);transform-origin:100% 0">11</div>
<div class="cell" style="right:1163px;top:469px;transform:scaleX(1.007);transform-origin:100% 0">1712996220</div>
<div class="cell" style="left:207px;top:469px;transform:scaleX(0.934);transform-origin:0 0">ROJAS PARDO</div>
<div class="cell" style="left:377px;top:469px;transform:scaleX(0.920);transform-origin:0 0">JUSTO</div>
<div class="cell" style="left:580px;top:469px;transform:scaleX(0.949);transform-origin:0 0">CHIGUILPE</div>
<div class="cell" style="right:444px;top:469px;transform:scaleX(1.007);transform-origin:100% 0">983890639</div>
<div class="cell" style="right:1273px;top:489px;transform:scaleX(1.007);transform-origin:100% 0">12</div>
<div class="cell" style="right:1163px;top:489px;transform:scaleX(1.007);transform-origin:100% 0">2300635493</div>
<div class="cell" style="left:207px;top:489px;transform:scaleX(0.974);transform-origin:0 0">CANDO JIMENEZ</div>
<div class="cell" style="left:377px;top:489px;transform:scaleX(0.939);transform-origin:0 0">JINSON JAVIER</div>
<div class="cell" style="left:580px;top:489px;transform:scaleX(0.949);transform-origin:0 0">CHIGUILPE</div>
<div class="cell" style="right:444px;top:489px;transform:scaleX(1.007);transform-origin:100% 0">963653550</div>
<div class="cell" style="right:1273px;top:509px;transform:scaleX(1.007);transform-origin:100% 0">13</div>
<div class="cell" style="right:1163px;top:509px;transform:scaleX(1.007);transform-origin:100% 0">2300521537</div>
<div class="cell" style="left:207px;top:509px;transform:scaleX(0.955);transform-origin:0 0">TAPIA VELOZ</div>
<div class="cell" style="left:377px;top:509px;transform:scaleX(0.965);transform-origin:0 0">MAYELI NOCOLE</div>
<div class="cell" style="left:580px;top:509px;transform:scaleX(0.949);transform-origin:0 0">CHIGUILPE</div>
<div class="cell" style="right:444px;top:509px;transform:scaleX(1.007);transform-origin:100% 0">963274709</div>
<div class="cell" style="right:1273px;top:529px;transform:scaleX(1.007);transform-origin:100% 0">14</div>
<div class="cell" style="right:1163px;top:529px;transform:scaleX(1.007);transform-origin:100% 0">1714705389</div>
<div class="cell" style="left:207px;top:529px;transform:scaleX(0.949);transform-origin:0 0">TAPIA LESCANO</div>
<div class="cell" style="left:377px;top:529px;transform:scaleX(0.952);transform-origin:0 0">CRISTIAN DIEGO</div>
<div class="cell" style="left:580px;top:529px;transform:scaleX(0.949);transform-origin:0 0">CHIGUILPE</div>
<div class="cell" style="right:444px;top:529px;transform:scaleX(1.007);transform-origin:100% 0">963653550</div>
<div class="cell" style="right:1273px;top:549px;transform:scaleX(1.007);transform-origin:100% 0">15</div>
<div class="cell" style="right:1163px;top:549px;transform:scaleX(1.007);transform-origin:100% 0">1723102529</div>
<div class="cell" style="left:207px;top:549px;transform:scaleX(0.981);transform-origin:0 0">CANDO HARO</div>
<div class="cell" style="left:377px;top:549px;transform:scaleX(0.961);transform-origin:0 0">FRANKLIN LEON</div>
<div class="cell" style="left:580px;top:549px;transform:scaleX(0.949);transform-origin:0 0">CHIGUILPE</div>
<div class="cell" style="right:444px;top:549px;transform:scaleX(1.007);transform-origin:100% 0">963899506</div>
<div class="cell" style="right:1273px;top:569px;transform:scaleX(1.007);transform-origin:100% 0">16</div>
<div class="cell" style="right:1163px;top:569px;transform:scaleX(1.007);transform-origin:100% 0">1721660494</div>
<div class="cell" style="left:207px;top:569px;transform:scaleX(0.995);transform-origin:0 0">CAMACHO PULLUQUINGA</div>
<div class="cell" style="left:377px;top:569px;transform:scaleX(0.972);transform-origin:0 0">BLANCA MARICELA</div>
<div class="cell" style="left:580px;top:569px;transform:scaleX(0.959);transform-origin:0 0">VALLE HERMOSO</div>
<div class="cell" style="right:444px;top:569px;transform:scaleX(1.007);transform-origin:100% 0">987633003</div>
<div class="cell" style="right:1273px;top:589px;transform:scaleX(1.007);transform-origin:100% 0">17</div>
<div class="cell" style="right:1163px;top:589px;transform:scaleX(1.007);transform-origin:100% 0">1724652985</div>
<div class="cell" style="left:207px;top:589px;transform:scaleX(0.929);transform-origin:0 0">HARO ROSALES</div>
<div class="cell" style="left:377px;top:589px;transform:scaleX(0.989);transform-origin:0 0">WILMER GEOVANNY</div>
<div class="cell" style="left:580px;top:589px;transform:scaleX(0.949);transform-origin:0 0">CHIGUILPE</div>
<div class="cell" style="right:444px;top:589px;transform:scaleX(1.007);transform-origin:100% 0">994812762</div>
<div class="cell" style="right:1273px;top:609px;transform:scaleX(1.007);transform-origin:100% 0">18</div>
<div class="cell" style="right:1163px;top:609px;transform:scaleX(1.007);transform-origin:100% 0">1722185897</div>
<div class="cell" style="left:207px;top:609px;transform:scaleX(0.993);transform-origin:0 0">DAVILA BARAHONA</div>
<div class="cell" style="left:377px;top:609px;transform:scaleX(1.008);transform-origin:0 0">MARI BARAHONA</div>
<div class="cell" style="right:444px;top:609px;transform:scaleX(1.007);transform-origin:100% 0">969938119</div>
<div class="cell" style="right:1273px;top:629px;transform:scaleX(1.007);transform-origin:100% 0">19</div>
<div class="cell" style="right:1163px;top:629px;transform:scaleX(1.007);transform-origin:100% 0">1716614225</div>
<div class="cell" style="left:207px;top:629px;transform:scaleX(0.941);transform-origin:0 0">VALLE BOSQUEZ</div>
<div class="cell" style="left:377px;top:629px;transform:scaleX(0.977);transform-origin:0 0">NORMA ELSA</div>
<div class="cell" style="left:580px;top:629px;transform:scaleX(0.949);transform-origin:0 0">CHIGUILPE</div>
<div class="cell" style="right:444px;top:629px;transform:scaleX(1.007);transform-origin:100% 0">983935365</div>
<div class="cell" style="right:1273px;top:649px;transform:scaleX(1.007);transform-origin:100% 0">20</div>
<div class="cell" style="right:1163px;top:649px;transform:scaleX(1.007);transform-origin:100% 0">1705864195</div>
<div class="cell" style="left:207px;top:649px;transform:scaleX(0.932);transform-origin:0 0">BOSQUEZ CABEZAS</div>
<div class="cell" style="left:377px;top:649px;transform:scaleX(0.979);transform-origin:0 0">LAURA GRIMANESA</div>
<div class="cell" style="left:580px;top:649px;transform:scaleX(0.949);transform-origin:0 0">CHIGUILPE</div>
<div class="cell" style="right:444px;top:649px;transform:scaleX(1.007);transform-origin:100% 0">983935365</div>
<div class="cell" style="right:1273px;top:669px;transform:scaleX(1.007);transform-origin:100% 0">21</div>
<div class="cell" style="right:1163px;top:669px;transform:scaleX(1.007);transform-origin:100% 0">1800786079</div>
<div class="cell" style="left:207px;top:669px;transform:scaleX(0.972);transform-origin:0 0">CEVALLOS MIRANDA</div>
<div class="cell" style="left:377px;top:669px;transform:scaleX(0.893);transform-origin:0 0">ELSA</div>
<div class="cell" style="left:580px;top:669px;transform:scaleX(0.922);transform-origin:0 0">4 DE FEBRERO</div>
<div class="cell" style="right:444px;top:669px;transform:scaleX(1.007);transform-origin:100% 0">993766134</div>
<div class="a" style="left:203px;top:622px;width:173px;height:23px;border:2px solid #217346"></div>
<div class="a" style="left:371px;top:640px;width:7px;height:7px;background:#217346;border:1px solid #fff"></div>
<div class="a" style="left:1346px;top:203px;width:20px;height:475px;background:#e6e6e6"></div>
<div class="a" style="left:1348px;top:205px;width:15px;height:15px;background:#fff;border:1px solid #ababab"></div>
<svg class="a" style="left:1351px;top:209px" width="9" height="6"><path d="M0 5h9L4.5 0z" fill="#222"/></svg>
<div class="a" style="left:1348px;top:220px;width:15px;height:325px;background:#fff;border:1px solid #ababab"></div>
<div class="a" style="left:1348px;top:664px;width:15px;height:15px;background:#fff;border:1px solid #ababab"></div>
<svg class="a" style="left:1351px;top:669px" width="9" height="6"><path d="M0 0h9L4.5 5z" fill="#222"/></svg>
<div class="a" style="left:0;top:678px;width:1346px;height:1px;background:#9a9a9a"></div>
<div class="a" style="left:0;top:679px;width:1366px;height:27px;background:#e6e6e6"></div>
<div class="a" style="left:850px;top:686px;width:480px;height:13px;background:#f0f0f0"></div>
<svg class="a" style="left:26px;top:687px" width="40" height="9"><path d="M5 0.5L1 4.5 5 8.5z" fill="#bdbdbd"/><path d="M30 0.5l4 4-4 4z" fill="#bdbdbd"/></svg>
<div class="a" style="left:100px;top:678px;width:94px;height:25px;background:#fff;border-left:1px solid #c6c6c6;border-right:1px solid #c6c6c6"></div>
<div class="a" style="left:100px;top:701px;width:94px;height:2px;background:#217346"></div>
<div class="t" style="left:113px;top:685px;font-size:12.5px;font-weight:bold;color:#217346">pollos 2024</div>
<svg class="a" style="left:226px;top:684px" width="17" height="17"><circle cx="8.5" cy="8.5" r="7.3" fill="none" stroke="#777" stroke-width="1.2"/><path d="M8.5 4.5v8M4.5 8.5h8" stroke="#777" stroke-width="1.3"/></svg>
<svg class="a" style="left:818px;top:686px" width="4" height="14"><circle cx="2" cy="2" r="1" fill="#aaa"/><circle cx="2" cy="7" r="1" fill="#aaa"/><circle cx="2" cy="12" r="1" fill="#aaa"/></svg>
<div class="a" style="left:836px;top:685px;width:15px;height:15px;background:#fff;border:1px solid #ababab"></div>
<svg class="a" style="left:841px;top:688px" width="6" height="9"><path d="M5 0v9L0 4.5z" fill="#222"/></svg>
<div class="a" style="left:850px;top:685px;width:436px;height:15px;background:#fff;border:1px solid #ababab"></div>
<div class="a" style="left:1330px;top:685px;width:15px;height:15px;background:#fff;border:1px solid #ababab"></div>
<svg class="a" style="left:1335px;top:688px" width="6" height="9"><path d="M0 0v9L5 4.5z" fill="#222"/></svg>
<div class="a" style="left:0;top:706px;width:1366px;height:22px;background:#f3f3f3;border-top:1px solid #d6d6d6"></div>
<div class="t" style="left:7px;top:712px;font-size:11.2px;color:#333">Listo</div>
<svg class="a" style="left:49px;top:710px" width="18" height="16" viewBox="0 0 18 16"><g fill="none" stroke="#444" stroke-width="1.2"><path d="M5.5 1.2A6 6 0 0 0 5.5 12.8" stroke-dasharray="3.2 1.4"/><path d="M6.5 0v5.5M4.5 3.5l2 2 2-2"/><path d="M8 5.5h5M11 3.5l2 2-2 2"/></g><path d="M8.3 11l2.2 3 5-6" fill="none" stroke="#444" stroke-width="1.7"/></svg>
<div class="t" style="left:68px;top:712px;font-size:11.6px;color:#333">Accesibilidad: todo correcto</div>
<div class="a" style="left:1066px;top:707px;width:40px;height:21px;background:#c6c6c6"></div>
<svg class="a" style="left:1078px;top:709px" width="100" height="15" viewBox="0 0 100 15"><g fill="none" stroke="#666" stroke-width="1.1"><rect x="1.5" y="1.5" width="12" height="12" fill="#d9d9d9"/><path d="M5.5 1.5v12M9.5 1.5v12M1.5 5.5h12M1.5 9.5h12"/>
<rect x="41.5" y="1.5" width="13" height="12"/><rect x="44.5" y="3.5" width="7" height="8"/><path d="M46 5.5h4M46 7.5h4M46 9.5h4"/><rect x="81.5" y="1.5" width="13" height="12"/><path d="M85.5 1.5v7M89.5 1.5v7M81.5 8.5h8"/></g></svg>
<svg class="a" style="left:1190px;top:710px" width="130" height="15" viewBox="0 0 130 15"><g stroke="#555" stroke-width="1.2"><path d="M2 7h7"/><path d="M15 7.5h100"/><path d="M120 7.5h7.5M123.75 3.5v8"/></g><rect x="63" y="2" width="5" height="11" fill="#555"/></svg>
<div class="t" style="left:1332px;top:712px;font-size:10.8px;color:#333">100%</div>
<div class="a" style="left:0;top:728px;width:1366px;height:10px;background:#1b2a30"></div>
<div class="a" style="left:441px;top:728px;width:48px;height:10px;background:#4b5557"></div>
<div class="a" style="left:70px;top:736px;width:8px;height:2px;background:#f2f2f2;border-radius:4px 4px 0 0"></div>
<div class="a" style="left:266px;top:737px;width:7px;height:1px;background:#2e7fd0;border-radius:3px 3px 0 0"></div>
<div class="a" style="left:310px;top:735px;width:16px;height:3px;background:#3ab4dc;border-radius:8px 8px 0 0"></div>
<div class="a" style="left:360px;top:735px;width:14px;height:3px;background:#d9443a;border-radius:7px 7px 0 0"></div>
<div class="a" style="left:410px;top:736px;width:18px;height:2px;background:#3c78c8;border-radius:0px 0px 0 0"></div>
<div class="a" style="left:459px;top:736px;width:18px;height:2px;background:#3a9e66;border-radius:0px 0px 0 0"></div>
<div class="a" style="left:504px;top:736px;width:21px;height:2px;background:#b8302a;border-radius:5px 5px 0 0"></div>
<div class="a" style="left:993px;top:735px;width:19px;height:3px;background:#e8a030;border-radius:9px 9px 0 0"></div>
<svg class="a" style="left:219px;top:735px" width="8" height="3"><path d="M0 3L4 0 8 3z" fill="#e8d050"/></svg>
<div class="t" style="left:1268px;top:732px;font-size:11px;color:#fff">12:26</div>
<div class="a" style="left:1361px;top:728px;width:1px;height:10px;background:#6a7478"></div>
</body></html>
